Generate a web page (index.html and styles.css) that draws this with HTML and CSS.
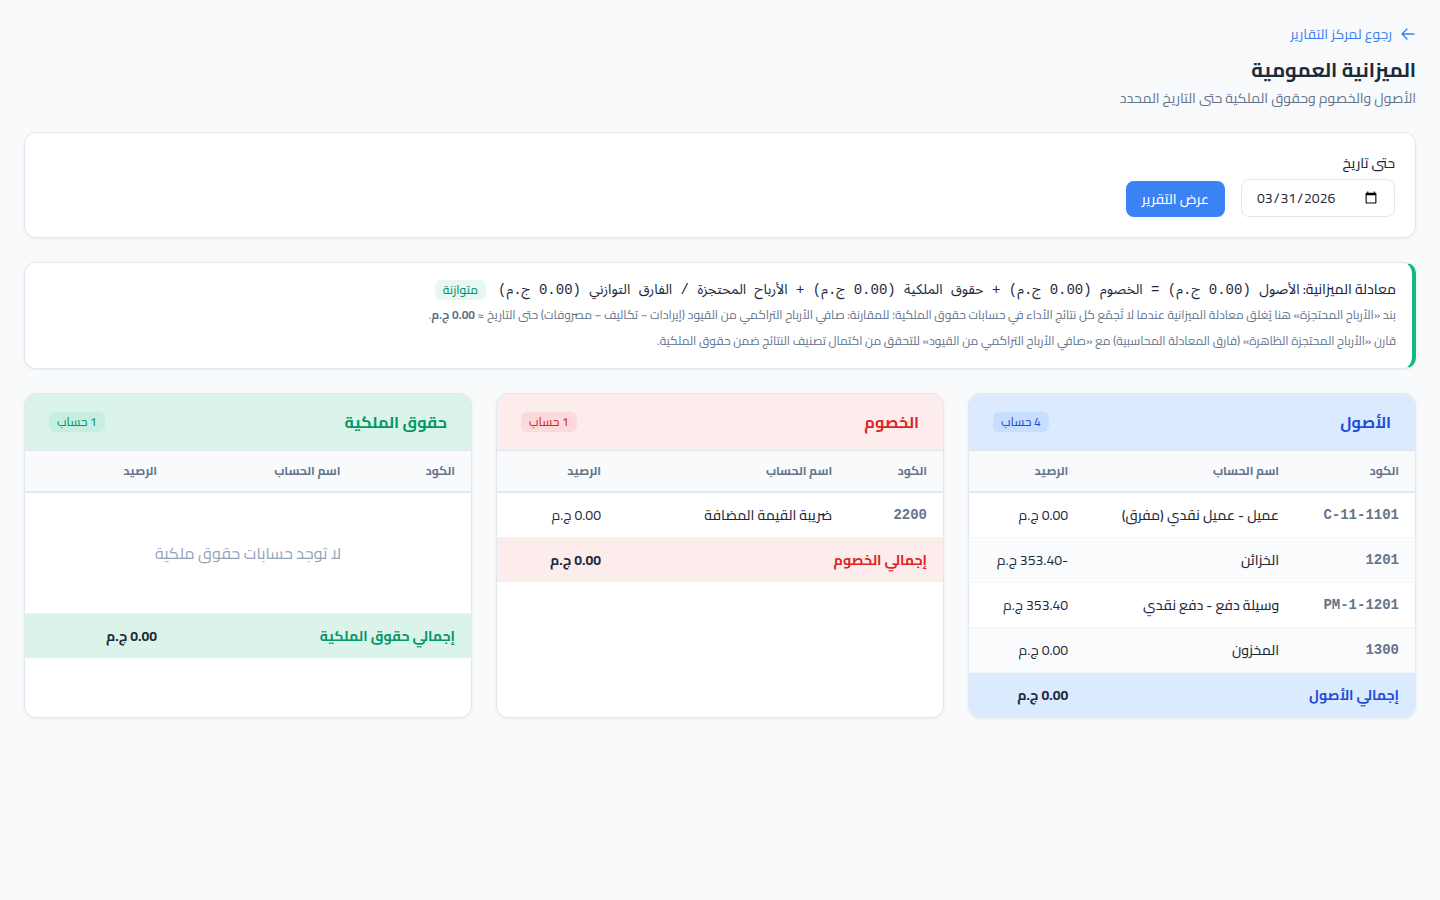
FILE: index.html
```html
<!DOCTYPE html>
<html lang="ar" dir="rtl">
<head>
  <meta charset="UTF-8">
  <meta name="viewport" content="width=device-width, initial-scale=1.0">
  <title>الميزانية العمومية</title>
  <link rel="stylesheet" href="styles.css">
</head>
<body>
  <main class="page">
    <header class="page-header">
      <a href="#" class="back-link">
        <svg width="16" height="16" viewBox="0 0 16 16" fill="none" stroke="currentColor" stroke-width="1.4" stroke-linecap="round" stroke-linejoin="round" aria-hidden="true">
          <path d="M14 8H2M7 3L2 8l5 5"/>
        </svg>
        رجوع لمركز التقارير
      </a>
      <h1 class="page-title">الميزانية العمومية</h1>
      <p class="page-subtitle">الأصول والخصوم وحقوق الملكية حتى التاريخ المحدد</p>
    </header>

    <form class="card filter">
      <div class="field">
        <label for="as-of">حتى تاريخ</label>
        <input type="date" id="as-of" value="2026-03-31">
      </div>
      <button type="button" class="btn">عرض التقرير</button>
    </form>

    <section class="card equation">
      <div class="equation-row">
        <span>معادلة الميزانية:</span>
        <span class="mono">الأصول (0.00 ج.م) = الخصوم (0.00 ج.م) + حقوق الملكية (0.00 ج.م) + الأرباح المحتجزة / الفارق التوازني (0.00 ج.م)</span>
        <span class="badge badge-balanced">متوازنة</span>
      </div>
      <p class="note">بند «الأرباح المحتجزة» هنا يُغلق معادلة الميزانية عندما لا تُجمّع كل نتائج الأداء في حسابات حقوق الملكية؛ للمقارنة: صافي الأرباح التراكمي من القيود (إيرادات − تكاليف − مصروفات) حتى التاريخ ≈ <strong>0.00 ج.م</strong>.</p>
      <p class="note">قارن «الأرباح المحتجزة الظاهرة» (فارق المعادلة المحاسبية) مع «صافي الأرباح التراكمي من القيود» للتحقق من اكتمال تصنيف النتائج ضمن حقوق الملكية.</p>
    </section>

    <div class="sections">
      <section class="card account-card assets">
        <div class="account-header">
          <h2>الأصول</h2>
          <span class="badge">4 حساب</span>
        </div>
        <table>
          <thead>
            <tr><th>الكود</th><th>اسم الحساب</th><th>الرصيد</th></tr>
          </thead>
          <tbody>
            <tr><td class="code">C-11-1101</td><td class="name">عميل - عميل نقدي (مفرق)</td><td>0.00 ج.م</td></tr>
            <tr><td class="code">1201</td><td class="name">الخزائن</td><td>-353.40 ج.م</td></tr>
            <tr><td class="code">PM-1-1201</td><td class="name">وسيلة دفع - دفع نقدي</td><td>353.40 ج.م</td></tr>
            <tr><td class="code">1300</td><td class="name">المخزون</td><td>0.00 ج.م</td></tr>
          </tbody>
          <tfoot>
            <tr><td colspan="2" class="total">إجمالي الأصول</td><td>0.00 ج.م</td></tr>
          </tfoot>
        </table>
      </section>

      <section class="card account-card liabilities">
        <div class="account-header">
          <h2>الخصوم</h2>
          <span class="badge">1 حساب</span>
        </div>
        <table>
          <thead>
            <tr><th>الكود</th><th>اسم الحساب</th><th>الرصيد</th></tr>
          </thead>
          <tbody>
            <tr><td class="code">2200</td><td class="name">ضريبة القيمة المضافة</td><td>0.00 ج.م</td></tr>
          </tbody>
          <tfoot>
            <tr><td colspan="2" class="total">إجمالي الخصوم</td><td>0.00 ج.م</td></tr>
          </tfoot>
        </table>
      </section>

      <section class="card account-card equity">
        <div class="account-header">
          <h2>حقوق الملكية</h2>
          <span class="badge">1 حساب</span>
        </div>
        <table>
          <thead>
            <tr><th>الكود</th><th>اسم الحساب</th><th>الرصيد</th></tr>
          </thead>
          <tbody>
            <tr><td colspan="3" class="empty">لا توجد حسابات حقوق ملكية</td></tr>
          </tbody>
          <tfoot>
            <tr><td colspan="2" class="total">إجمالي حقوق الملكية</td><td>0.00 ج.م</td></tr>
          </tfoot>
        </table>
      </section>
    </div>
  </main>
</body>
</html>
```
FILE: styles.css
```css
* {
  box-sizing: border-box;
  margin: 0;
  padding: 0;
}
body {
  font-family: Cairo, "Noto Sans", "DejaVu Sans", sans-serif;
  font-size: 14px;
  line-height: 24px;
  background: #f8fafc;
  color: #1e293b;
}
.page {
  display: flex;
  flex-direction: column;
  gap: 24px;
  padding: 24px;
}
.back-link {
  display: flex;
  align-items: center;
  gap: 8px;
  width: fit-content;
  line-height: 20px;
  margin-bottom: 8px;
  color: #3b82f6;
  text-decoration: none;
}
.page-title {
  font-size: 20px;
  line-height: 36px;
  font-weight: 700;
}
.page-subtitle {
  line-height: 20px;
  color: #64748b;
}
.card {
  background: white;
  border: 1px solid #e2e8f0;
  border-radius: 12px;
  box-shadow: 0 1px 3px rgba(0, 0, 0, 0.06);
}

/* filter */
.filter {
  display: flex;
  align-items: flex-end;
  gap: 16px;
  padding: 20px;
}
.field {
  display: flex;
  flex-direction: column;
  gap: 6px;
}
.field label {
  line-height: 20px;
  font-weight: 500;
}
.field input {
  width: 154px;
  height: 38px;
  padding: 8px 14px;
  border: 1px solid #e2e8f0;
  border-radius: 8px;
  background: white;
  color: #1e293b;
  font: inherit;
}
.btn {
  height: 36px;
  padding: 0 16px;
  border: none;
  border-radius: 8px;
  background: #3b82f6;
  color: white;
  font: inherit;
  font-weight: 500;
  cursor: pointer;
}

/* equation */
.equation {
  padding: 14px 16px;
  border-right: 4px solid #10b981;
}
.equation-row {
  display: flex;
  align-items: baseline;
  line-height: 24px;
  font-weight: 500;
}
.mono {
  margin-right: 3px;
  font-family: "Liberation Mono", "Noto Sans Arabic", monospace;
  font-weight: 400;
}
.equation-row .badge {
  margin-right: 12px;
}
.note {
  font-size: 12px;
  line-height: 26px;
  color: #64748b;
}
.badge {
  padding: 0 8px;
  border-radius: 6px;
  font-size: 12px;
  line-height: 20px;
  font-weight: 500;
}
.badge-balanced {
  background: #e7f8f2;
  color: #059669;
}

/* accounts */
.sections {
  display: grid;
  grid-template-columns: repeat(3, 1fr);
  gap: 24px;
}
.account-card {
  overflow: hidden;
}
.account-header {
  display: flex;
  align-items: center;
  justify-content: space-between;
  height: 57px;
  padding: 0 24px;
  border-bottom: 1px solid #e2e8f0;
}
.account-header h2 {
  font-size: 16px;
  font-weight: 700;
}
table {
  width: 100%;
  border-collapse: collapse;
}
th, td {
  padding: 10px 16px;
  text-align: right;
  white-space: nowrap;
}
th {
  font-size: 12px;
  line-height: 20px;
  font-weight: 700;
  color: #64748b;
  background: #f8fafc;
  border-bottom: 2px solid #e2e8f0;
}
tbody td {
  border-bottom: 1px solid #f1f5f9;
}
tbody tr:nth-child(even) {
  background: #fafbfc;
}
.code {
  font-family: "Liberation Mono", monospace;
  font-weight: 600;
  color: #64748b;
}
.name {
  font-weight: 500;
}
.empty {
  padding: 48px;
  font-size: 16px;
  text-align: center;
  color: #94a3b8;
}
tfoot td {
  font-weight: 700;
}
.assets .account-header, .assets tfoot {
  background: #dbeafe;
}
.assets h2, .assets .badge, .assets .total {
  color: #1d4ed8;
}
.assets .badge {
  background: #c8deff;
}
.liabilities .account-header, .liabilities tfoot {
  background: #fdecec;
}
.liabilities h2, .liabilities .badge, .liabilities .total {
  color: #dc2626;
}
.liabilities .badge {
  background: #fbdadb;
}
.equity .account-header, .equity tfoot {
  background: #dbf4ea;
}
.equity h2, .equity .badge, .equity .total {
  color: #059669;
}
.equity .badge {
  background: #c7efe0;
}
```
